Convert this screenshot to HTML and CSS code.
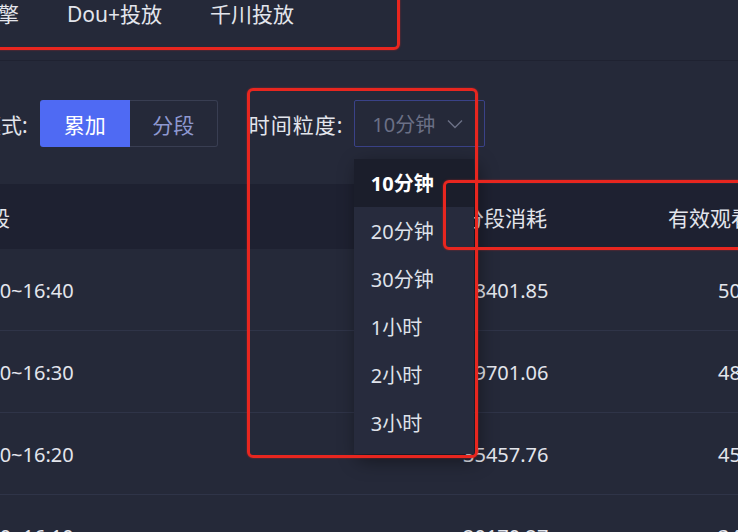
FILE: index.html
```html
<!doctype html>
<html lang="zh-cn">
<head>
  <meta charset="UTF-8">
  <title>投放数据</title>
  <link rel="stylesheet" href="styles.css">
</head>
<body>
  <div class="page">
    <nav class="tabs">
      <span class="tab">引擎</span>
      <span class="tab">Dou+投放</span>
      <span class="tab">千川投放</span>
    </nav>

    <div class="toolbar">
      <span class="label">模式:</span>
      <div class="seg">
        <button type="button" class="seg-btn active">累加</button>
        <button type="button" class="seg-btn">分段</button>
      </div>
      <span class="label label-gran">时间粒度:</span>
      <div class="select">
        <span class="select-value">10分钟</span>
        <svg class="chevron" width="16" height="10" viewBox="0 0 16 10">
          <polyline points="1,1.5 8,8.5 15,1.5" fill="none" stroke="#6b7086" stroke-width="1.4"/>
        </svg>
        <ul class="dropdown">
          <li class="opt selected">10分钟</li>
          <li class="opt">20分钟</li>
          <li class="opt">30分钟</li>
          <li class="opt">1小时</li>
          <li class="opt">2小时</li>
          <li class="opt">3小时</li>
        </ul>
      </div>
    </div>

    <div class="table">
      <div class="row head">
        <span class="cell first">时段</span>
        <span class="cell">分段消耗</span>
        <span class="cell">有效观看</span>
      </div>
      <div class="row">
        <span class="cell">16:30~16:40</span>
        <span class="cell">28401.85</span>
        <span class="cell num">5021</span>
      </div>
      <div class="row">
        <span class="cell">16:20~16:30</span>
        <span class="cell">29701.06</span>
        <span class="cell num">4876</span>
      </div>
      <div class="row">
        <span class="cell">16:10~16:20</span>
        <span class="cell">35457.76</span>
        <span class="cell num">4532</span>
      </div>
      <div class="row">
        <span class="cell">16:00~16:10</span>
        <span class="cell">20170.27</span>
        <span class="cell num">3418</span>
      </div>
    </div>
  </div>

  <!-- 标注框 -->
  <div class="mark mark-tabs"></div>
  <div class="mark mark-gran"></div>
  <div class="mark mark-col"></div>
</body>
</html>
```

FILE: styles.css
```css
html, body {
  margin: 0;
  height: 100%;
  overflow: hidden;
}

body {
  position: relative;
  background: #252939;
  color: #e3e5ec;
  font-family: "Noto Sans", "Noto Sans CJK SC", sans-serif;
  font-size: 21px;
}

.page {
  position: relative;
}

/* 顶部页签 */
.tabs {
  display: flex;
  gap: 48px;
  height: 60px;
  margin-left: -23px;
  line-height: 28px;
  border-bottom: 1px solid #1f2231;
}

.tab {
  white-space: nowrap;
}

/* 模式 / 粒度 */
.toolbar {
  display: flex;
  align-items: center;
  height: 47px;
  margin: 39px 0 0 -20px;
}

.label {
  margin-right: 12px;
  white-space: nowrap;
}

.label-gran {
  margin-left: 31px;
  margin-right: 11px;
  letter-spacing: 1px;
}

.seg {
  display: flex;
  height: 47px;
}

.seg-btn {
  width: 88px;
  height: 47px;
  padding: 0;
  font: inherit;
  color: #8e98d0;
  background: transparent;
  border: 1px solid #393e52;
  border-left: none;
  border-radius: 0 3px 3px 0;
  cursor: pointer;
}

.seg-btn.active {
  width: 90px;
  color: #fff;
  background: #4f6af3;
  border: none;
  border-radius: 3px 0 0 3px;
}

.select {
  position: relative;
  box-sizing: border-box;
  display: flex;
  align-items: center;
  width: 131px;
  height: 47px;
  padding-left: 17px;
  border: 1.5px solid #3a4288;
  border-radius: 2px;
  color: #6b7086;
  font-size: 20px;
}

.chevron {
  margin-left: 12px;
}

.dropdown {
  position: absolute;
  z-index: 3;
  top: 58px;
  left: -1.5px;
  width: 120px;
  margin: 0;
  padding: 0 0 7px;
  list-style: none;
  background: #272b3d;
  box-shadow: rgb(0 0 0 / 45%) 4px 6px 18px;
  color: #dfe2ea;
}

.opt {
  height: 48px;
  padding-left: 17px;
  line-height: 50px;
  white-space: nowrap;
}

.opt.selected {
  background: #1b1e2b;
  color: #fff;
  font-weight: bold;
}

/* 数据表 */
.table {
  margin: 37px 0 0 -40px;
  font-size: 20px;
}

.row {
  display: grid;
  grid-template-columns: 503px 205px 1fr;
  align-items: center;
  height: 82px;
  padding-top: 2px;
  box-sizing: border-box;
  border-bottom: 1px solid #2f3448;
  white-space: nowrap;
}

.row.head {
  height: 65px;
  padding-top: 0;
  font-size: 21px;
  background: #1e2131;
  border-bottom: none;
}

.cell.first {
  margin-left: 8px;
}

.cell.num {
  padding-left: 50px;
}

/* 红色标注框 */
.mark {
  position: absolute;
  z-index: 5;
  box-sizing: border-box;
  border: 3.5px solid #e8261f;
  border-radius: 6px;
  box-shadow: 0 0 2px rgb(232 38 31 / 60%);
  pointer-events: none;
}

.mark-tabs {
  left: -20px;
  top: -20px;
  width: 420px;
  height: 70px;
}

.mark-gran {
  left: 247px;
  top: 88px;
  width: 231px;
  height: 370px;
}

.mark-col {
  left: 443px;
  top: 180px;
  width: 330px;
  height: 70px;
}
```
